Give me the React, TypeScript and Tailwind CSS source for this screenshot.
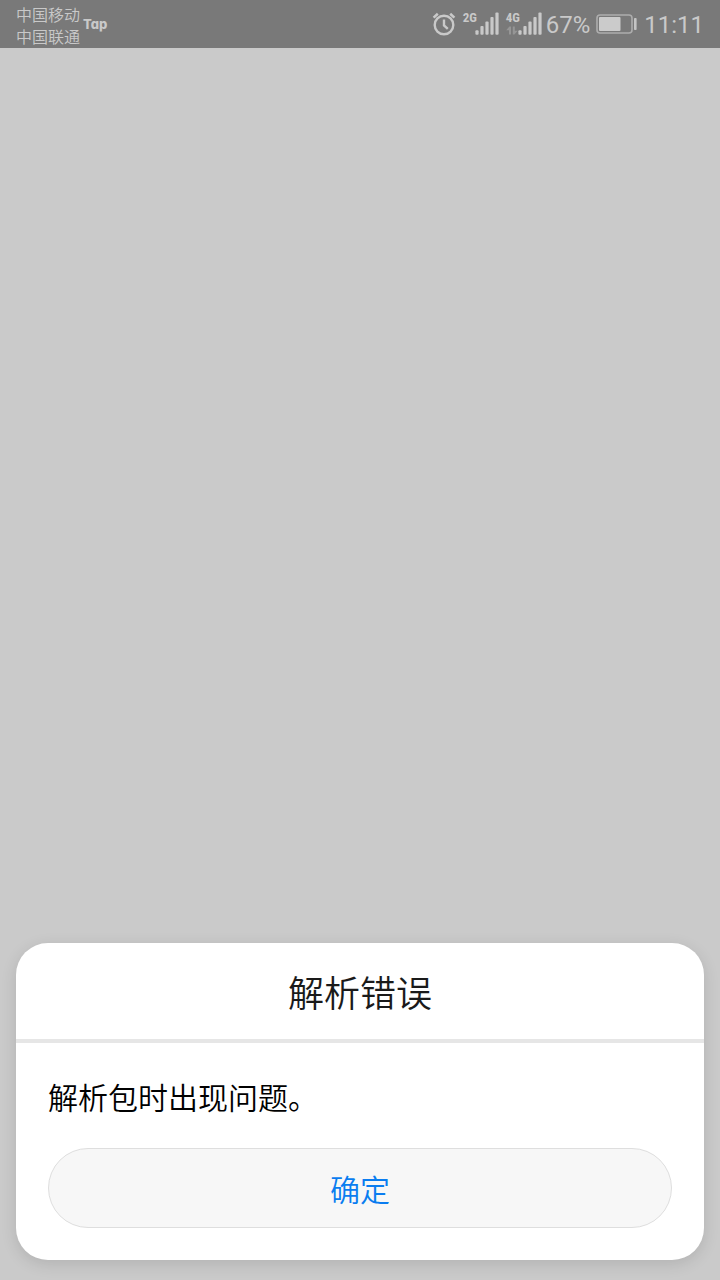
function AlarmIcon() {
  return (
    <svg className="h-6 w-6 shrink-0" viewBox="0 0 24 24" fill="none" stroke="currentColor" aria-label="闹钟" role="img">
      <circle cx="12" cy="13" r="9.3" strokeWidth="2.4" />
      <path d="M12 7.6v5.8l3.8 3.4" strokeWidth="2.4" />
      <path d="M1.6 5.6 5.8 1.8M22.4 5.6 18.2 1.8" strokeWidth="2.6" />
    </svg>
  );
}

function SignalBars() {
  return (
    <svg className="h-[23px] w-6 shrink-0" viewBox="0 0 24 23" fill="currentColor" aria-hidden="true">
      <rect x="0.4" y="18.3" width="3.2" height="4.5" rx="1" />
      <rect x="5.4" y="14" width="3.2" height="8.8" rx="1" />
      <rect x="10.4" y="9.5" width="3.2" height="13.3" rx="1" />
      <rect x="15.4" y="5" width="3.2" height="17.8" rx="1" />
      <rect x="20.4" y="0.4" width="3.2" height="22.4" rx="1" />
    </svg>
  );
}

function DataArrows() {
  return (
    <svg className="h-[9px] w-3" viewBox="0 0 12 9" fill="#969696" aria-hidden="true">
      <path d="M0.2 4.2 3.4 0.6H5v8H3V4.2ZM6.8 0.6h2v4.2h2.9L8.4 8.6H6.8Z" />
    </svg>
  );
}

function Network({ label, active }: { label: string; active?: boolean }) {
  return (
    <div className="flex h-6 items-start">
      <div className="flex w-3 flex-col gap-[2px]">
        <span className="font-['Liberation_Sans_Narrow','Roboto_Condensed','Roboto',sans-serif] text-[13px] leading-[12px] font-bold whitespace-nowrap">
          {label}
        </span>
        {active && <DataArrows />}
      </div>
      <SignalBars />
    </div>
  );
}

function Battery() {
  return (
    <svg className="h-5 w-[41px] shrink-0" viewBox="0 0 41 20" aria-label="电量 67%" role="img">
      <rect x="1" y="1" width="35" height="18" rx="3" fill="none" stroke="#adadad" strokeWidth="1.6" />
      <rect x="3" y="3" width="21.5" height="14" rx="1" fill="#cbcbcb" />
      <rect x="38" y="4" width="2.6" height="12" rx="0.8" fill="#c4c4c4" />
    </svg>
  );
}

function StatusBar() {
  return (
    <header className="flex h-12 items-center justify-between bg-[#797979] px-4 text-[#c9c9c9]">
      <div className="flex items-center gap-[3px]">
        <div className="pt-px text-[16px] leading-[22px] font-[350]">
          <p>中国移动</p>
          <p>中国联通</p>
        </div>
        <span className="font-['Inter',sans-serif] text-[13px] leading-4 font-extrabold [font-feature-settings:'cv11']">
          Tap
        </span>
      </div>
      <div className="flex items-center font-['Roboto',sans-serif] text-[24px] leading-8">
        <AlarmIcon />
        <div className="ml-[7px] flex gap-[7px]">
          <Network label="2G" />
          <Network label="4G" active />
        </div>
        <span className="ml-1 pt-px">67%</span>
        <div className="mr-[7px] ml-[6px]">
          <Battery />
        </div>
        <time className="pt-px">11:11</time>
      </div>
    </header>
  );
}

export default function App() {
  return (
    <div className="flex min-h-screen flex-col bg-[#cacaca] font-['Noto_Sans_CJK_SC',sans-serif]" lang="zh-CN">
      <StatusBar />
      <main className="flex flex-1 items-end px-4 pb-5">
        <section
          role="alertdialog"
          aria-labelledby="dialog-title"
          aria-describedby="dialog-message"
          className="w-full rounded-[32px] bg-white shadow-[0_4px_16px_rgba(0,0,0,0.12)]"
        >
          <h1
            id="dialog-title"
            className="border-b-4 border-[#e6e6e6] py-6 text-center text-[36px] leading-[48px] font-[350] text-[#1a1a1a]"
          >
            解析错误
          </h1>
          <div className="flex flex-col gap-[31px] px-8 pt-8 pb-8">
            <p id="dialog-message" className="text-[30px] leading-[42px] font-[350] text-black">
              解析包时出现问题。
            </p>
            <button
              type="button"
              className="h-20 w-full rounded-full border border-[#dedede] bg-[#f7f7f7] text-[30px] font-[350] text-[#0a7df0]"
            >
              确定
            </button>
          </div>
        </section>
      </main>
    </div>
  );
}
